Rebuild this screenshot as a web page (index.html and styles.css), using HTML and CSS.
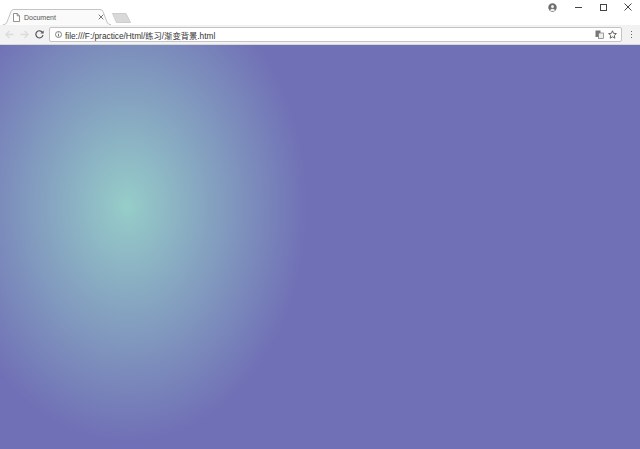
FILE: index.html
```html
<!DOCTYPE html>
<html lang="en">
<head>
    <meta charset="UTF-8">
    <title>Document</title>
    <link rel="stylesheet" href="styles.css">
</head>
<body>
    <header class="browser">
        <div class="tabstrip">
            <div class="tab">
                <svg class="tab-shape" width="108" height="16" viewBox="0 0 108 16">
                    <path d="M0 15.5 H1 Q3 15.5 4 13 L8 2.5 Q8.6 .5 11 .5 H97 Q99.4 .5 100 2.5 L104 13 Q105 15.5 107 15.5 H108" fill="#fafafa" stroke="#c4c4c4"/>
                </svg>
                <svg class="page-icon" width="7" height="9" viewBox="0 0 7 9">
                    <path d="M.5 .5 H4.2 L6.5 2.8 V8.5 H.5 Z M4.2 .5 V2.8 H6.5" fill="#fff" stroke="#777" stroke-width=".8"/>
                </svg>
                <span class="tab-title">Document</span>
                <svg class="tab-close" width="6" height="6" viewBox="0 0 6 6">
                    <path d="M.7 .7 L5.3 5.3 M5.3 .7 L.7 5.3" stroke="#777" stroke-width="1"/>
                </svg>
            </div>
            <svg class="new-tab" width="19" height="10" viewBox="0 0 19 10">
                <path d="M.5 .5 H14 L18.5 9.5 H4.5 Z" fill="#d9d9d9" stroke="#cdcdcd"/>
            </svg>
            <div class="window-controls">
                <svg class="profile" width="9" height="9" viewBox="0 0 9 9">
                    <circle cx="4.5" cy="4.5" r="4.2" fill="#6e6e6e"/>
                    <circle cx="4.5" cy="3.4" r="1.5" fill="#eee"/>
                    <path d="M1.8 7.2 Q4.5 4.4 7.2 7.2 Q4.5 9 1.8 7.2" fill="#eee"/>
                </svg>
                <svg class="win-min" width="7" height="1" viewBox="0 0 7 1"><path d="M0 .5 H7" stroke="#444"/></svg>
                <svg class="win-max" width="7" height="7" viewBox="0 0 7 7"><rect x=".5" y=".5" width="6" height="6" fill="none" stroke="#444"/></svg>
                <svg class="win-close" width="8" height="8" viewBox="0 0 8 8"><path d="M.5 .5 L7.5 7.5 M7.5 .5 L.5 7.5" stroke="#444"/></svg>
            </div>
        </div>
        <div class="toolbar">
            <svg class="nav-icon" width="9" height="9" viewBox="0 0 9 9"><path d="M8.5 4.5 H1 M4.5 1 L1 4.5 L4.5 8" fill="none" stroke="#dcdcdc" stroke-width="1.4"/></svg>
            <svg class="nav-icon" width="9" height="9" viewBox="0 0 9 9"><path d="M.5 4.5 H8 M4.5 1 L8 4.5 L4.5 8" fill="none" stroke="#dcdcdc" stroke-width="1.4"/></svg>
            <svg class="nav-icon" width="9" height="9" viewBox="0 0 9 9"><path d="M7.6 2.6 A3.6 3.6 0 1 0 8 5" fill="none" stroke="#555" stroke-width="1.2"/><path d="M8.6 .4 V3.6 H5.4 Z" fill="#555"/></svg>
            <div class="omnibox">
                <svg class="info-icon" width="7" height="7" viewBox="0 0 7 7">
                    <circle cx="3.5" cy="3.5" r="3" fill="none" stroke="#666" stroke-width=".8"/>
                    <path d="M3.5 3 V5.4 M3.5 1.5 V2.3" stroke="#666" stroke-width=".9"/>
                </svg>
                <span class="url">file:///F:/practice/Html/练习/渐变背景.html</span>
                <svg class="translate-icon" width="9" height="9" viewBox="0 0 9 9">
                    <rect x=".5" y=".5" width="5" height="6.5" fill="#777"/>
                    <rect x="3.5" y="3" width="5" height="5.5" fill="#eee" stroke="#777" stroke-width=".7"/>
                </svg>
                <svg class="star-icon" width="9" height="9" viewBox="0 0 9 9">
                    <path d="M4.5 .8 L5.6 3.3 L8.4 3.6 L6.3 5.4 L6.9 8.2 L4.5 6.8 L2.1 8.2 L2.7 5.4 L.6 3.6 L3.4 3.3 Z" fill="none" stroke="#555" stroke-width=".9"/>
                </svg>
            </div>
            <div class="menu-dots"><i></i><i></i><i></i></div>
        </div>
    </header>
    <main class="viewport"></main>
</body>
</html>
```

FILE: styles.css
```css
html, body {
    height: 100%;
}
body {
    margin: 0;
    display: flex;
    flex-direction: column;
    overflow: hidden;
    font-family: "Liberation Sans", "Noto Sans CJK SC", sans-serif;
    color: #333;
    background: #7070b6;
}
.browser {
    flex: none;
    height: 45px;
}
.tabstrip {
    height: 25px;
    background: #fff;
    display: flex;
    align-items: flex-end;
    padding-left: 3px;
    box-sizing: border-box;
}
.tab {
    position: relative;
    width: 108px;
    height: 16px;
    display: flex;
    align-items: center;
    padding: 0 7px 0 10px;
    box-sizing: border-box;
}
.tab-shape {
    position: absolute;
    left: 0;
    top: 0;
}
.page-icon, .tab-title, .tab-close {
    position: relative;
}
.tab-title {
    margin-left: 4px;
    font-size: 7px;
    color: #555;
    flex: 1;
}
.new-tab {
    margin: 0 0 2px 1px;
}
.window-controls {
    margin-left: auto;
    align-self: flex-start;
    height: 14px;
    display: flex;
    align-items: center;
    padding-right: 8px;
}
.profile { margin-right: 18px; }
.win-min { margin-right: 18px; }
.win-max { margin-right: 17px; }
.toolbar {
    height: 20px;
    background: #f2f2f2;
    display: flex;
    align-items: center;
    padding: 0 8px 0 5px;
    box-sizing: border-box;
    border-bottom: 1px solid #d8d8dc;
}
.nav-icon {
    margin-right: 6px;
}
.nav-icon:nth-child(3) {
    margin-right: 5px;
}
.omnibox {
    flex: 1;
    height: 15px;
    background: #fff;
    border: 1px solid #c4c4c4;
    border-radius: 2px;
    display: flex;
    align-items: center;
    padding: 0 4px 0 5px;
    box-sizing: border-box;
}
.info-icon {
    margin-right: 3px;
}
.url {
    flex: 1;
    font-size: 8.3px;
    color: #333;
    white-space: nowrap;
}
.translate-icon {
    margin-right: 4px;
}
.menu-dots {
    margin-left: 8.5px;
    display: flex;
    flex-direction: column;
    gap: 1.5px;
}
.menu-dots i {
    display: block;
    width: 1.5px;
    height: 1.5px;
    background: #666;
}
.viewport {
    flex: 1;
    background: radial-gradient(ellipse 180px 235px at 127px 161px, #96cdc9 0%, #7070b6 100%);
}
```
